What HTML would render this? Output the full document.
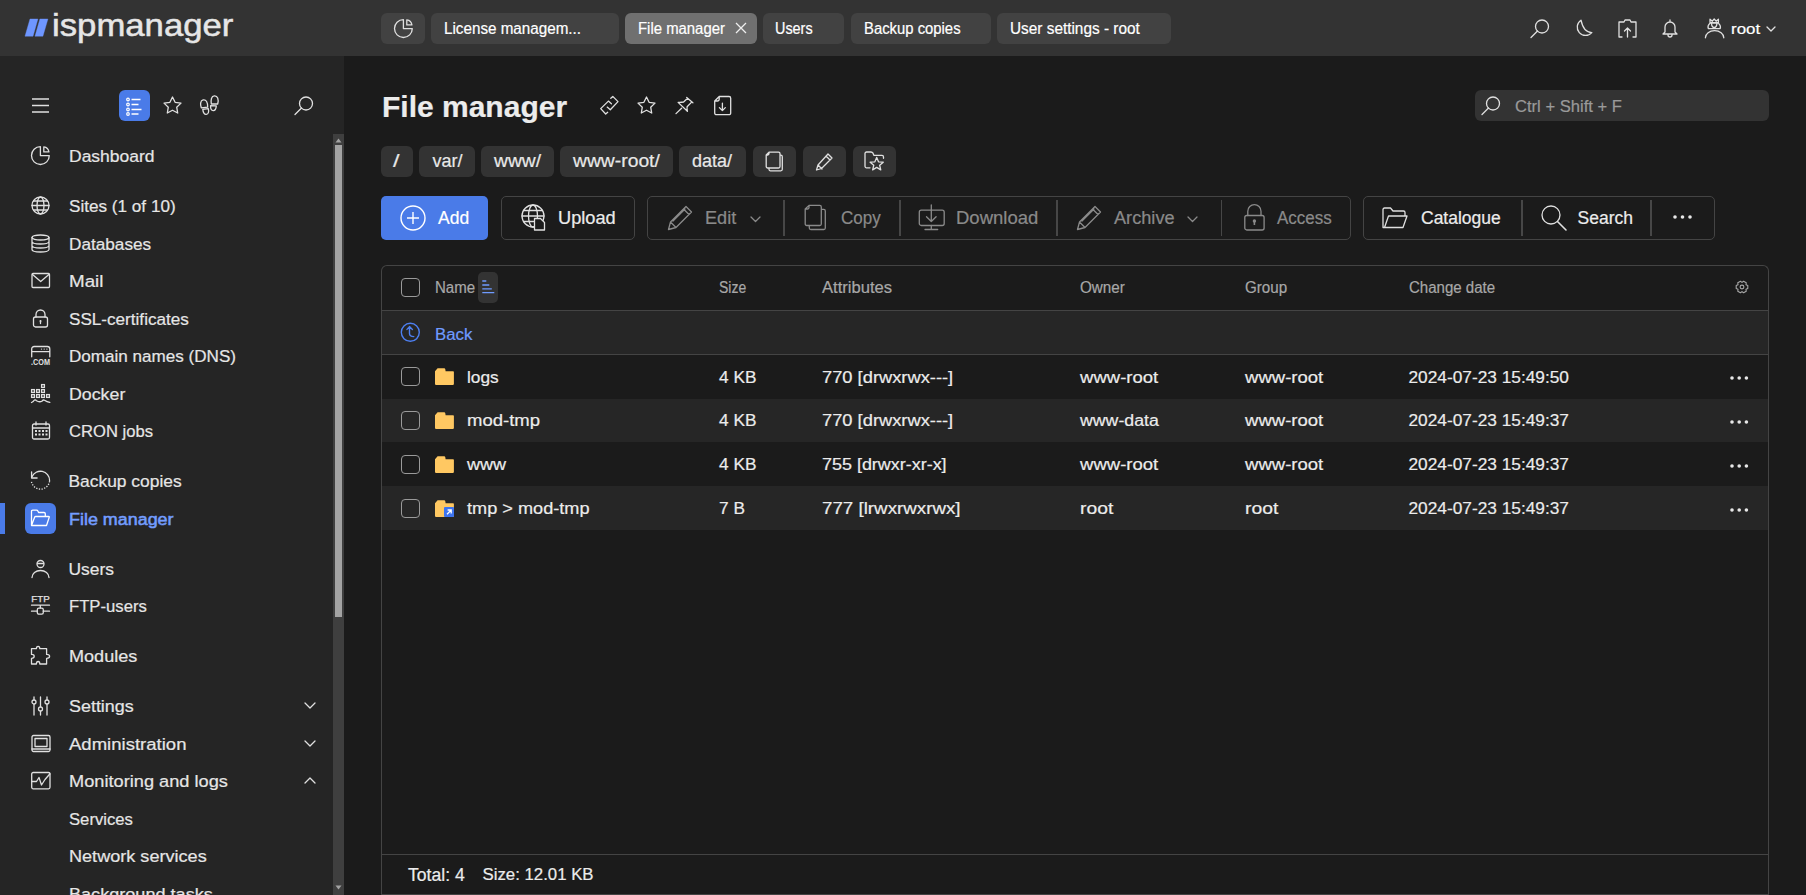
<!DOCTYPE html>
<html><head><meta charset="utf-8">
<style>
*{box-sizing:border-box;margin:0;padding:0}
html,body{width:1806px;height:895px;overflow:hidden;background:#1b1b1b;font-family:"Liberation Sans",sans-serif;color:#e8e8e8}
.t{position:absolute;white-space:nowrap;-webkit-text-stroke:0.2px currentColor}
.b{position:absolute}
svg{position:absolute;overflow:visible}
</style></head><body>
<div class="b" style="left:0px;top:0px;width:1806px;height:56px;background:#333333"></div>
<div class="b" style="left:0px;top:56px;width:344px;height:839px;background:#252525"></div>
<div class="b" style="left:344px;top:56px;width:1462px;height:839px;background:#1b1b1b"></div>
<svg style="left:25px;top:19px;" width="23" height="18" viewBox="0 0 23 18"><path d="M5 0H12.9L8 17.2H0Z M14.9 0H22.9L17.9 17.2H10Z" fill="#6e96ff" stroke="#6e96ff" stroke-width="0.4" stroke-linejoin="round"/></svg>
<div class="t" style="left:52px;top:9.11px;font-size:32px;line-height:32px;color:#e6e6e6;font-weight:normal;transform:scaleX(1.085);transform-origin:0 0;-webkit-text-stroke:0.5px #e6e6e6">ispmanager</div>
<div class="b" style="left:381px;top:13px;width:44px;height:31px;background:#424242;border-radius:6px"></div>
<div class="b" style="left:431px;top:13px;width:188px;height:31px;background:#424242;border-radius:6px"></div>
<div class="t" style="left:444px;top:20.79px;font-size:15.6px;line-height:15.6px;color:#ffffff;font-weight:normal;transform:scaleX(0.976);transform-origin:0 0;">License managem...</div>
<div class="b" style="left:625px;top:13px;width:132px;height:31px;background:#707070;border-radius:6px"></div>
<div class="t" style="left:638px;top:20.79px;font-size:15.6px;line-height:15.6px;color:#ffffff;font-weight:normal;transform:scaleX(0.955);transform-origin:0 0;">File manager</div>
<div class="b" style="left:763px;top:13px;width:81px;height:31px;background:#424242;border-radius:6px"></div>
<div class="t" style="left:775px;top:20.79px;font-size:15.6px;line-height:15.6px;color:#ffffff;font-weight:normal;transform:scaleX(0.923);transform-origin:0 0;">Users</div>
<div class="b" style="left:851px;top:13px;width:140px;height:31px;background:#424242;border-radius:6px"></div>
<div class="t" style="left:864px;top:20.79px;font-size:15.6px;line-height:15.6px;color:#ffffff;font-weight:normal;transform:scaleX(0.952);transform-origin:0 0;">Backup copies</div>
<div class="b" style="left:997px;top:13px;width:174px;height:31px;background:#424242;border-radius:6px"></div>
<div class="t" style="left:1010px;top:20.79px;font-size:15.6px;line-height:15.6px;color:#ffffff;font-weight:normal;transform:scaleX(0.985);transform-origin:0 0;">User settings - root</div>
<svg style="left:394px;top:19px;" width="19" height="19" viewBox="0 0 19 19"><path d="M9.4 0.7V9.6H18.3A8.9 8.9 0 1 1 9.4 0.7z" fill="none" stroke="#e0e0e0" stroke-width="1.3" stroke-linecap="round" stroke-linejoin="round"/><path d="M12.8 0.8V5.9H17.9A5.9 5.9 0 0 0 12.8 0.8z" fill="none" stroke="#e0e0e0" stroke-width="1.3" stroke-linecap="round" stroke-linejoin="round"/></svg>
<svg style="left:735px;top:22px;" width="12" height="12" viewBox="0 0 12 12"><path d="M1 1l10 10M11 1L1 11" fill="none" stroke="#eee" stroke-width="1.3"/></svg>
<svg style="left:1530px;top:19px;" width="20" height="19" viewBox="0 0 20 19"><circle cx="12" cy="7.5" r="6.5" fill="none" stroke="#e0e0e0" stroke-width="1.3" stroke-linecap="round" stroke-linejoin="round"/><path d="M7.5 12L1 18.5" fill="none" stroke="#e0e0e0" stroke-width="1.3" stroke-linecap="round" stroke-linejoin="round"/></svg>
<svg style="left:1574px;top:19px;" width="19" height="19" viewBox="0 0 19 19"><path d="M7 1.2A8.3 8.3 0 1 0 17.8 13.6Q9.5 13.5 7 1.2z" fill="none" stroke="#e0e0e0" stroke-width="1.3" stroke-linecap="round" stroke-linejoin="round"/></svg>
<svg style="left:1618px;top:19px;" width="19" height="19" viewBox="0 0 19 19"><path d="M4 18H1V3h5l1-2h5l1 2h5v15h-3" fill="none" stroke="#e0e0e0" stroke-width="1.3" stroke-linecap="round" stroke-linejoin="round"/><path d="M9.5 18V9M6.5 12l3-3 3 3" fill="none" stroke="#e0e0e0" stroke-width="1.3" stroke-linecap="round" stroke-linejoin="round"/></svg>
<svg style="left:1662px;top:19px;" width="16" height="19" viewBox="0 0 16 19"><path d="M8 1v2M3 13V8a5 5 0 0 1 10 0v5l2 2H1z M6 16a2 2 0 0 0 4 0" fill="none" stroke="#e0e0e0" stroke-width="1.3" stroke-linecap="round" stroke-linejoin="round"/></svg>
<svg style="left:1704px;top:18px;" width="21" height="21" viewBox="0 0 21 21"><path d="M6 4.7V1.2L8.3 3.2 10.2 1 12.1 3.2 14.4 1.2V4.7Z M4.3 10.6Q3.2 7.8 6 5.1H14.4Q17.2 7.8 16.2 10.6Z M7.4 5.4Q7.9 9.5 10.2 9.5Q12.5 9.5 13 5.4 M1.4 19.8A9.2 7.2 0 0 1 19.8 19.8" fill="none" stroke="#e0e0e0" stroke-width="1.3" stroke-linecap="round" stroke-linejoin="round"/></svg>
<div class="t" style="left:1730.5px;top:21.30px;font-size:15px;line-height:15px;color:#ffffff;font-weight:normal;transform:scaleX(1.127);transform-origin:0 0;">root</div>
<svg style="left:1766px;top:26px;" width="10" height="6" viewBox="0 0 10 6"><path d="M1 1l4 4 4-4" fill="none" stroke="#e0e0e0" stroke-width="1.3" stroke-linecap="round" stroke-linejoin="round"/></svg>
<svg style="left:31px;top:98px;" width="19" height="15" viewBox="0 0 19 15"><path d="M1 1h17M1 7.5h17M1 14h17" fill="none" stroke="#e0e0e0" stroke-width="1.4"/></svg>
<div class="b" style="left:119px;top:90px;width:31px;height:31px;background:#4a7be8;border-radius:6px"></div>
<svg style="left:125px;top:96px;" width="20" height="20" viewBox="0 0 20 20"><g fill="none" stroke="#fff" stroke-width="1.2"><circle cx="3" cy="3.5" r="1.3"/><circle cx="3" cy="8.5" r="1.3"/><circle cx="3" cy="13.5" r="1.3"/><circle cx="3" cy="18" r="1.3"/></g><g stroke="#fff" stroke-width="1.3"><path d="M6.5 3.5h9M6.5 8.5h7M6.5 13.5h10M6.5 18h7"/></g></svg>
<svg style="left:163px;top:96px;" width="19" height="19" viewBox="0 0 19 19"><path d="M9.5 1l2.6 5.3 5.9.8-4.3 4.1 1 5.8-5.2-2.8-5.2 2.8 1-5.8L1 7.1l5.9-.8z" fill="none" stroke="#e0e0e0" stroke-width="1.3" stroke-linecap="round" stroke-linejoin="round"/></svg>
<svg style="left:199px;top:95px;" width="21" height="21" viewBox="0 0 21 21"><path d="M2.3 12.8C1.2 10 1 5.6 4.1 4.9 7.2 4.3 8.8 7.3 8.7 12.2z M3.8 14.4L9.3 13.6C10.1 16.8 9.4 19.3 7.3 19.4 5.3 19.6 4.1 17.6 3.8 14.4z M12.3 9C11.7 5 12.3 1.1 15.4 .9 18.6 .7 19.9 4.3 18.7 9z M11.6 10.6L17.3 10.9C17.1 13.8 16.1 15.7 14.2 15.6 12.3 15.5 11.4 13.6 11.6 10.6z" fill="none" stroke="#e0e0e0" stroke-width="1.3" stroke-linecap="round" stroke-linejoin="round"/></svg>
<svg style="left:294px;top:96px;" width="20" height="19" viewBox="0 0 20 19"><circle cx="12" cy="7.5" r="6.5" fill="none" stroke="#e0e0e0" stroke-width="1.3" stroke-linecap="round" stroke-linejoin="round"/><path d="M7.5 12L1 18.5" fill="none" stroke="#e0e0e0" stroke-width="1.3" stroke-linecap="round" stroke-linejoin="round"/></svg>
<div class="b" style="left:333px;top:134px;width:11px;height:761px;background:#3f3f3f"></div>
<div class="b" style="left:335px;top:145px;width:7px;height:472px;background:#a3a3a3"></div>
<svg style="left:335px;top:138px;" width="7" height="5" viewBox="0 0 7 5"><path d="M3.5 0.5L6.5 4.5H0.5z" fill="#a3a3a3"/></svg>
<svg style="left:335px;top:885px;" width="7" height="5" viewBox="0 0 7 5"><path d="M3.5 4.5L6.5 0.5H0.5z" fill="#a3a3a3"/></svg>
<div class="t" style="left:68.5px;top:148.07px;font-size:17.4px;line-height:17.4px;color:#e6e6e6;font-weight:normal;transform:scaleX(1.006);transform-origin:0 0;">Dashboard</div>
<div class="t" style="left:68.5px;top:198.07px;font-size:17.4px;line-height:17.4px;color:#e6e6e6;font-weight:normal;transform:scaleX(0.985);transform-origin:0 0;">Sites (1 of 10)</div>
<div class="t" style="left:68.5px;top:235.57px;font-size:17.4px;line-height:17.4px;color:#e6e6e6;font-weight:normal;transform:scaleX(0.988);transform-origin:0 0;">Databases</div>
<div class="t" style="left:68.5px;top:273.07px;font-size:17.4px;line-height:17.4px;color:#e6e6e6;font-weight:normal;transform:scaleX(1.080);transform-origin:0 0;">Mail</div>
<div class="t" style="left:68.5px;top:310.57px;font-size:17.4px;line-height:17.4px;color:#e6e6e6;font-weight:normal;transform:scaleX(0.984);transform-origin:0 0;">SSL-certificates</div>
<div class="t" style="left:68.5px;top:348.07px;font-size:17.4px;line-height:17.4px;color:#e6e6e6;font-weight:normal;transform:scaleX(0.982);transform-origin:0 0;">Domain names (DNS)</div>
<div class="t" style="left:68.5px;top:385.57px;font-size:17.4px;line-height:17.4px;color:#e6e6e6;font-weight:normal;transform:scaleX(1.022);transform-origin:0 0;">Docker</div>
<div class="t" style="left:68.5px;top:423.07px;font-size:17.4px;line-height:17.4px;color:#e6e6e6;font-weight:normal;transform:scaleX(0.955);transform-origin:0 0;">CRON jobs</div>
<div class="t" style="left:68.5px;top:473.07px;font-size:17.4px;line-height:17.4px;color:#e6e6e6;font-weight:normal;">Backup copies</div>
<div class="t" style="left:69px;top:510.57px;font-size:17.4px;line-height:17.4px;color:#739dff;font-weight:normal;-webkit-text-stroke:0.55px #739dff;transform:scaleX(1.030);transform-origin:0 0;">File manager</div>
<div class="t" style="left:68.5px;top:560.57px;font-size:17.4px;line-height:17.4px;color:#e6e6e6;font-weight:normal;">Users</div>
<div class="t" style="left:68.5px;top:598.07px;font-size:17.4px;line-height:17.4px;color:#e6e6e6;font-weight:normal;transform:scaleX(0.959);transform-origin:0 0;">FTP-users</div>
<div class="t" style="left:68.5px;top:648.07px;font-size:17.4px;line-height:17.4px;color:#e6e6e6;font-weight:normal;transform:scaleX(1.040);transform-origin:0 0;">Modules</div>
<div class="t" style="left:68.5px;top:698.07px;font-size:17.4px;line-height:17.4px;color:#e6e6e6;font-weight:normal;transform:scaleX(1.030);transform-origin:0 0;">Settings</div>
<div class="t" style="left:68.5px;top:735.57px;font-size:17.4px;line-height:17.4px;color:#e6e6e6;font-weight:normal;transform:scaleX(1.066);transform-origin:0 0;">Administration</div>
<div class="t" style="left:68.5px;top:773.07px;font-size:17.4px;line-height:17.4px;color:#e6e6e6;font-weight:normal;transform:scaleX(1.047);transform-origin:0 0;">Monitoring and logs</div>
<div class="t" style="left:68.5px;top:810.57px;font-size:17.4px;line-height:17.4px;color:#e6e6e6;font-weight:normal;transform:scaleX(0.958);transform-origin:0 0;">Services</div>
<div class="t" style="left:68.5px;top:848.07px;font-size:17.4px;line-height:17.4px;color:#e6e6e6;font-weight:normal;transform:scaleX(1.040);transform-origin:0 0;">Network services</div>
<div class="t" style="left:68.5px;top:885.57px;font-size:17.4px;line-height:17.4px;color:#e6e6e6;font-weight:normal;transform:scaleX(1.040);transform-origin:0 0;">Background tasks</div>
<div class="b" style="left:0px;top:503px;width:5px;height:31px;background:#4a7be8"></div>
<div class="b" style="left:25px;top:503px;width:31px;height:31px;background:#4a7be8;border-radius:6px"></div>
<svg style="left:30px;top:509px;" width="21" height="19" viewBox="0 0 21 19"><path d="M1.5 16.5V2.5Q1.5 1.2 2.8 1.2H6.5Q7.5 1.2 8 2.2L8.6 3.5H14Q15.3 3.5 15.3 4.8V7.5 M1.5 16.5L4.6 8.2Q4.9 7.5 5.7 7.5H18.6Q19.5 7.5 19.2 8.4L16.5 16.5Z" fill="none" stroke="#fff" stroke-width="1.3" stroke-linejoin="round"/></svg>
<svg style="left:31px;top:146px;" width="19" height="19" viewBox="0 0 19 19"><path d="M9.4 0.7V9.6H18.3A8.9 8.9 0 1 1 9.4 0.7z" fill="none" stroke="#e0e0e0" stroke-width="1.3" stroke-linecap="round" stroke-linejoin="round"/><path d="M12.8 0.8V5.9H17.9A5.9 5.9 0 0 0 12.8 0.8z" fill="none" stroke="#e0e0e0" stroke-width="1.3" stroke-linecap="round" stroke-linejoin="round"/></svg>
<svg style="left:31px;top:196px;" width="19" height="19" viewBox="0 0 19 19"><circle cx="9.5" cy="9.5" r="8.5" fill="none" stroke="#e0e0e0" stroke-width="1.3" stroke-linecap="round" stroke-linejoin="round"/><ellipse cx="9.5" cy="9.5" rx="3.5" ry="8.5" fill="none" stroke="#e0e0e0" stroke-width="1.3" stroke-linecap="round" stroke-linejoin="round"/><path d="M1 9.5h17M2.5 5h14M2.5 14h14" fill="none" stroke="#e0e0e0" stroke-width="1.3" stroke-linecap="round" stroke-linejoin="round"/></svg>
<svg style="left:31px;top:233.5px;" width="19" height="19" viewBox="0 0 19 19"><ellipse cx="9.5" cy="3.5" rx="8.5" ry="2.5" fill="none" stroke="#e0e0e0" stroke-width="1.3" stroke-linecap="round" stroke-linejoin="round"/><path d="M1 3.5v12c0 1.4 3.8 2.5 8.5 2.5s8.5-1.1 8.5-2.5v-12 M1 7.5c0 1.4 3.8 2.5 8.5 2.5s8.5-1.1 8.5-2.5 M1 11.5c0 1.4 3.8 2.5 8.5 2.5s8.5-1.1 8.5-2.5" fill="none" stroke="#e0e0e0" stroke-width="1.3" stroke-linecap="round" stroke-linejoin="round"/></svg>
<svg style="left:31px;top:271px;" width="19" height="19" viewBox="0 0 19 19"><rect x="1" y="2.5" width="17.5" height="14" rx="1" fill="none" stroke="#e0e0e0" stroke-width="1.3" stroke-linecap="round" stroke-linejoin="round"/><path d="M1.5 3.5l8.2 7 8.2-7" fill="none" stroke="#e0e0e0" stroke-width="1.3" stroke-linecap="round" stroke-linejoin="round"/></svg>
<svg style="left:31px;top:308.5px;" width="19" height="19" viewBox="0 0 19 19"><rect x="2.5" y="8" width="14" height="10" rx="2" fill="none" stroke="#e0e0e0" stroke-width="1.3" stroke-linecap="round" stroke-linejoin="round"/><path d="M5 8V5.5a4.5 4.5 0 0 1 9 0V8 M9.5 12v2.5" fill="none" stroke="#e0e0e0" stroke-width="1.3" stroke-linecap="round" stroke-linejoin="round"/><circle cx="9.5" cy="12" r="1" fill="#e0e0e0"/></svg>
<svg style="left:31px;top:346px;" width="19" height="19" viewBox="0 0 19 19"><path d="M0.7 10.8V3A2.5 2.5 0 0 1 3.2 0.5H16.3A2.5 2.5 0 0 1 18.8 3V10.8M0.7 5.6H18.8" fill="none" stroke="#e0e0e0" stroke-width="1.3" stroke-linecap="round" stroke-linejoin="round"/><g fill="#e0e0e0"><circle cx="10.5" cy="3.1" r="0.7"/><circle cx="13.2" cy="3.1" r="0.7"/><circle cx="15.9" cy="3.1" r="0.7"/></g><text x="0" y="18.8" font-size="8.2" font-weight="bold" fill="#e0e0e0" font-family="Liberation Sans" textLength="19" lengthAdjust="spacingAndGlyphs">.COM</text></svg>
<svg style="left:31px;top:384px;" width="20" height="20" viewBox="0 0 20 20"><g fill="none" stroke="#e0e0e0" stroke-width="1.3"><rect x="10.6" y="0.6" width="2.8" height="2.8"/><rect x="0.6" y="5.6" width="2.8" height="2.8"/><rect x="5.6" y="5.6" width="2.8" height="2.8"/><rect x="10.6" y="5.6" width="2.8" height="2.8"/><rect x="0.6" y="10.6" width="2.8" height="2.8"/><rect x="5.6" y="10.6" width="2.8" height="2.8"/><rect x="10.6" y="10.6" width="2.8" height="2.8"/><rect x="15.6" y="10.6" width="2.8" height="2.8"/></g><path d="M0.5 18.5Q2.5 17.8 3.2 16.3Q4 15.3 5.5 16.8Q8.5 18.6 11.2 17Q12.3 15.5 13.5 16.2Q16 18 18.8 18.4" fill="none" stroke="#e0e0e0" stroke-width="1.3" stroke-linecap="round" stroke-linejoin="round"/></svg>
<svg style="left:31px;top:421px;" width="19" height="19" viewBox="0 0 19 19"><rect x="1.5" y="3" width="17" height="15" rx="1.5" fill="none" stroke="#e0e0e0" stroke-width="1.3" stroke-linecap="round" stroke-linejoin="round"/><path d="M1.5 7h17M5 1v3M15 1v3" fill="none" stroke="#e0e0e0" stroke-width="1.3" stroke-linecap="round" stroke-linejoin="round"/><g fill="#e0e0e0"><rect x="4" y="9" width="2" height="2"/><rect x="7.5" y="9" width="2" height="2"/><rect x="11" y="9" width="2" height="2"/><rect x="14.5" y="9" width="2" height="2"/><rect x="4" y="12.5" width="2" height="2"/><rect x="7.5" y="12.5" width="2" height="2"/><rect x="11" y="12.5" width="2" height="2"/><rect x="14.5" y="12.5" width="2" height="2"/></g></svg>
<svg style="left:31px;top:471px;" width="19" height="19" viewBox="0 0 19 19"><path d="M1 5.7A9.2 9.2 0 0 1 18.6 9.4" fill="none" stroke="#e0e0e0" stroke-width="1.3" stroke-linecap="round" stroke-linejoin="round"/><path d="M18.6 10.2A9.2 9.2 0 0 1 0.4 10.4" fill="none" stroke="#e0e0e0" stroke-width="1.3" stroke-dasharray="1.3 1.4"/><path d="M0.6 1V7H6.1" fill="none" stroke="#e0e0e0" stroke-width="1.3" stroke-linecap="round" stroke-linejoin="round"/></svg>
<svg style="left:31px;top:558.5px;" width="19" height="19" viewBox="0 0 19 19"><circle cx="9.5" cy="5" r="3.5" fill="none" stroke="#e0e0e0" stroke-width="1.3" stroke-linecap="round" stroke-linejoin="round"/><path d="M1 18.5a8.5 7 0 0 1 17 0" fill="none" stroke="#e0e0e0" stroke-width="1.3" stroke-linecap="round" stroke-linejoin="round"/><path d="M6.5 4.5h6" fill="none" stroke="#e0e0e0" stroke-width="1.3" stroke-linecap="round" stroke-linejoin="round"/></svg>
<svg style="left:31px;top:595px;" width="19" height="19" viewBox="0 0 19 19"><text x="0.3" y="7.3" font-size="8.6" fill="#e0e0e0" stroke="#e0e0e0" stroke-width="0.25" font-family="Liberation Sans" textLength="18.4" lengthAdjust="spacingAndGlyphs">FTP</text><path d="M0.5 10.2H18.5M0.5 16.2H6.3M12.3 16.2H18.5M9.3 10.2V13" fill="none" stroke="#e0e0e0" stroke-width="1.3" stroke-linecap="round" stroke-linejoin="round"/><rect x="6.3" y="13.2" width="6" height="6" rx="1.6" fill="none" stroke="#e0e0e0" stroke-width="1.3"/></svg>
<svg style="left:31px;top:646px;" width="19" height="19" viewBox="0 0 19 19"><path d="M0.5 2.7H5.4Q5.4 0.4 7.1 0.4Q8.8 0.4 8.8 2.7H15.6V8.4Q18.6 8.4 18.6 10.3Q18.6 12.3 15.6 12.3V18H8.8Q8.8 15.5 7.1 15.5Q5.4 15.5 5.4 18H0.5V12.3Q3.2 12.3 3.2 10.3Q3.2 8.4 0.5 8.4Z" fill="none" stroke="#e0e0e0" stroke-width="1.3" stroke-linecap="round" stroke-linejoin="round"/></svg>
<svg style="left:31px;top:696px;" width="19" height="19" viewBox="0 0 19 19"><path d="M3 1v18M9.5 1v18M16 1v18" fill="none" stroke="#e0e0e0" stroke-width="1.3" stroke-linecap="round" stroke-linejoin="round"/><circle cx="3" cy="6" r="2" fill="#252525" stroke="#e0e0e0" stroke-width="1.3"/><circle cx="9.5" cy="13" r="2" fill="#252525" stroke="#e0e0e0" stroke-width="1.3"/><circle cx="16" cy="6" r="2" fill="#252525" stroke="#e0e0e0" stroke-width="1.3"/></svg>
<svg style="left:31px;top:733.5px;" width="19" height="19" viewBox="0 0 19 19"><rect x="1" y="1.5" width="18" height="16" rx="1.5" fill="none" stroke="#e0e0e0" stroke-width="1.3" stroke-linecap="round" stroke-linejoin="round"/><rect x="4" y="4.5" width="12" height="8" fill="none" stroke="#e0e0e0" stroke-width="1.3" stroke-linecap="round" stroke-linejoin="round"/><path d="M1 15h18" fill="none" stroke="#e0e0e0" stroke-width="1.3" stroke-linecap="round" stroke-linejoin="round"/></svg>
<svg style="left:31px;top:771px;" width="20" height="19" viewBox="0 0 20 19"><rect x="0.7" y="1.5" width="18.3" height="16.3" rx="1.5" fill="none" stroke="#e0e0e0" stroke-width="1.3" stroke-linecap="round" stroke-linejoin="round"/><path d="M0.7 10.5H5.5L8 6.5 10.5 14 14 8.5 19 2.8" fill="none" stroke="#e0e0e0" stroke-width="1.3" stroke-linecap="round" stroke-linejoin="round"/></svg>
<svg style="left:304px;top:702px;" width="12" height="7" viewBox="0 0 12 7"><path d="M1 1l5 5 5-5" fill="none" stroke="#e0e0e0" stroke-width="1.3" stroke-linecap="round" stroke-linejoin="round"/></svg>
<svg style="left:304px;top:739.5px;" width="12" height="7" viewBox="0 0 12 7"><path d="M1 1l5 5 5-5" fill="none" stroke="#e0e0e0" stroke-width="1.3" stroke-linecap="round" stroke-linejoin="round"/></svg>
<svg style="left:304px;top:777px;" width="12" height="7" viewBox="0 0 12 7"><path d="M1 6l5-5 5 5" fill="none" stroke="#e0e0e0" stroke-width="1.3" stroke-linecap="round" stroke-linejoin="round"/></svg>
<div class="t" style="left:382px;top:91.81px;font-size:30px;line-height:30px;color:#ececec;font-weight:bold;">File manager</div>
<svg style="left:599px;top:95px;" width="21" height="21" viewBox="0 0 21 21"><path d="M12.4 8.7L9.4 6.1 1.7 13.6 6.7 19 8.7 17.3 M8.2 12.1L11.3 14.8 19 6.6 13.8 1.4 11.8 3.2" fill="none" stroke="#e0e0e0" stroke-width="1.3" stroke-linecap="round" stroke-linejoin="round"/></svg>
<svg style="left:637px;top:96px;" width="19" height="19" viewBox="0 0 19 19"><path d="M9.5 1l2.6 5.3 5.9.8-4.3 4.1 1 5.8-5.2-2.8-5.2 2.8 1-5.8L1 7.1l5.9-.8z" fill="none" stroke="#e0e0e0" stroke-width="1.3" stroke-linecap="round" stroke-linejoin="round"/></svg>
<svg style="left:675px;top:96px;" width="19" height="19" viewBox="0 0 19 19"><path d="M1 17.6L6.6 12.2 M3.1 6.4L12.4 15.3 M11.7 1.4L17.9 6.8 M3.1 6.4Q6 6.6 8.6 6L12.6 2.2 M12.4 15.3Q11.9 12.5 12.1 10.7L16.9 5.9" fill="none" stroke="#e0e0e0" stroke-width="1.3" stroke-linecap="round" stroke-linejoin="round"/></svg>
<svg style="left:714px;top:96px;" width="18" height="19" viewBox="0 0 18 19"><path d="M0.7 5L5.2 0.5H15A1.7 1.7 0 0 1 16.7 2.2V17A1.7 1.7 0 0 1 15 18.7H2.4A1.7 1.7 0 0 1 0.7 17z M0.7 5H3.5A1.7 1.7 0 0 0 5.2 3.3V0.5 M8.4 7.2V14.6 M5.4 11.6L8.4 14.6 11.3 11.6" fill="none" stroke="#e0e0e0" stroke-width="1.3" stroke-linecap="round" stroke-linejoin="round"/></svg>
<div class="b" style="left:1475px;top:90px;width:294px;height:31px;background:#333333;border-radius:6px"></div>
<svg style="left:1481px;top:96px;" width="20" height="19" viewBox="0 0 20 19"><circle cx="12" cy="7.5" r="6.5" fill="none" stroke="#e0e0e0" stroke-width="1.3" stroke-linecap="round" stroke-linejoin="round"/><path d="M7.5 12L1 18.5" fill="none" stroke="#e0e0e0" stroke-width="1.3" stroke-linecap="round" stroke-linejoin="round"/></svg>
<div class="t" style="left:1515px;top:99.45px;font-size:16.6px;line-height:16.6px;color:#9a9a9a;font-weight:normal;">Ctrl + Shift + F</div>
<div class="b" style="left:381px;top:146px;width:32px;height:31px;background:#333333;border-radius:6px"></div>
<div class="t" style="left:393px;top:152.46px;font-size:18px;line-height:18px;color:#e8e8e8;font-weight:normal;transform:scaleX(1.300);transform-origin:0 0;">/</div>
<div class="b" style="left:419px;top:146px;width:56px;height:31px;background:#333333;border-radius:6px"></div>
<div class="t" style="left:432.5px;top:152.46px;font-size:18px;line-height:18px;color:#e8e8e8;font-weight:normal;">var/</div>
<div class="b" style="left:481px;top:146px;width:73px;height:31px;background:#333333;border-radius:6px"></div>
<div class="t" style="left:494px;top:152.46px;font-size:18px;line-height:18px;color:#e8e8e8;font-weight:normal;transform:scaleX(1.071);transform-origin:0 0;">www/</div>
<div class="b" style="left:560px;top:146px;width:113px;height:31px;background:#333333;border-radius:6px"></div>
<div class="t" style="left:573px;top:152.46px;font-size:18px;line-height:18px;color:#e8e8e8;font-weight:normal;transform:scaleX(1.072);transform-origin:0 0;">www-root/</div>
<div class="b" style="left:679px;top:146px;width:67px;height:31px;background:#333333;border-radius:6px"></div>
<div class="t" style="left:692px;top:152.46px;font-size:18px;line-height:18px;color:#e8e8e8;font-weight:normal;">data/</div>
<div class="b" style="left:753px;top:146px;width:43px;height:31px;background:#333333;border-radius:6px"></div>
<div class="b" style="left:803px;top:146px;width:43px;height:31px;background:#333333;border-radius:6px"></div>
<div class="b" style="left:853px;top:146px;width:43px;height:31px;background:#333333;border-radius:6px"></div>
<svg style="left:765px;top:151px;" width="19" height="21" viewBox="0 0 19 21"><path d="M1.2 4L4 1.1H13.5A1.5 1.5 0 0 1 15 2.6V15.5A1.5 1.5 0 0 1 13.5 17H2.7A1.5 1.5 0 0 1 1.2 15.5Z M1.2 4H2.6A1.4 1.4 0 0 0 4 2.6V1.1 M15 4.2H15.8A1.5 1.5 0 0 1 17.3 5.7V18.3A1.5 1.5 0 0 1 15.8 19.8H5.5A1.5 1.5 0 0 1 4 18.3V17" fill="none" stroke="#e0e0e0" stroke-width="1.3" stroke-linecap="round" stroke-linejoin="round"/></svg>
<svg style="left:815px;top:152px;" width="19" height="19" viewBox="0 0 19 19"><path d="M13 2l4 4L6.5 16.5 1.5 18l1.5-5z M11 4l4 4 M3 13l4 4" fill="none" stroke="#e0e0e0" stroke-width="1.3" stroke-linecap="round" stroke-linejoin="round"/></svg>
<svg style="left:864px;top:151px;" width="21" height="21" viewBox="0 0 21 21"><path d="M6 16.8H2.5A1.5 1.5 0 0 1 1 15.3V2.5A1.5 1.5 0 0 1 2.5 1H7Q8.3 1 9 2.2L10 4.4H18A1.5 1.5 0 0 1 19.5 5.9V7.3" fill="none" stroke="#e0e0e0" stroke-width="1.3" stroke-linecap="round" stroke-linejoin="round"/><path d="M12.70 6.40 L14.52 10.79 L19.26 11.17 L15.65 14.26 L16.76 18.88 L12.70 16.40 L8.64 18.88 L9.75 14.26 L6.14 11.17 L10.88 10.79Z" fill="none" stroke="#e0e0e0" stroke-width="1.3" stroke-linecap="round" stroke-linejoin="round"/></svg>
<div class="b" style="left:381px;top:196px;width:107px;height:44px;background:#4a7be8;border-radius:5px"></div>
<svg style="left:400px;top:205px;" width="26" height="26" viewBox="0 0 26 26"><circle cx="13" cy="13" r="12" fill="none" stroke="#fff" stroke-width="1.4"/><path d="M13 7v12M7 13h12" stroke="#fff" stroke-width="1.4"/></svg>
<div class="t" style="left:438px;top:210.19px;font-size:17.5px;line-height:17.5px;color:#ffffff;font-weight:normal;">Add</div>
<div class="b" style="left:501px;top:196px;width:134px;height:44px;border:1px solid #444444;border-radius:5px"></div>
<svg style="left:521px;top:204px;" width="26" height="27" viewBox="0 0 26 27"><circle cx="12" cy="12" r="11" fill="none" stroke="#e0e0e0" stroke-width="1.3" stroke-linecap="round" stroke-linejoin="round"/><ellipse cx="12" cy="12" rx="4.5" ry="11" fill="none" stroke="#e0e0e0" stroke-width="1.3" stroke-linecap="round" stroke-linejoin="round"/><path d="M1 12h22M2.5 6.5h19M2.5 17.5h10" fill="none" stroke="#e0e0e0" stroke-width="1.3" stroke-linecap="round" stroke-linejoin="round"/><path d="M13.5 14.5h6l4 4v7.5h-10z" fill="#1b1b1b" stroke="#e0e0e0" stroke-width="1.3" stroke-linejoin="round"/></svg>
<div class="t" style="left:558px;top:210.19px;font-size:17.5px;line-height:17.5px;color:#ececec;font-weight:normal;transform:scaleX(1.041);transform-origin:0 0;">Upload</div>
<div class="b" style="left:647px;top:196px;width:704px;height:44px;border:1px solid #444444;border-radius:5px"></div>
<div class="b" style="left:783px;top:200px;width:2px;height:36px;background:#474747"></div>
<div class="b" style="left:899px;top:200px;width:2px;height:36px;background:#474747"></div>
<div class="b" style="left:1056px;top:200px;width:2px;height:36px;background:#474747"></div>
<div class="b" style="left:1221px;top:200px;width:1px;height:36px;background:#474747"></div>
<svg style="left:667px;top:205px;" width="26" height="26" viewBox="0 0 26 26"><path d="M19 1.5l5.5 5.5L9 22.5 1.5 24.5l2-7.5z M16.5 4l5.5 5.5 M3.5 17l5.5 5.5 M6 16l12-12" fill="none" stroke="#8a8a8a" stroke-width="1.3" stroke-linecap="round" stroke-linejoin="round"/></svg>
<div class="t" style="left:704.5px;top:210.19px;font-size:17.5px;line-height:17.5px;color:#8a8a8a;font-weight:normal;transform:scaleX(1.037);transform-origin:0 0;">Edit</div>
<svg style="left:750px;top:216px;" width="11" height="7" viewBox="0 0 11 7"><path d="M1 1l4.5 4.5L10 1" fill="none" stroke="#8a8a8a" stroke-width="1.3" stroke-linecap="round" stroke-linejoin="round"/></svg>
<svg style="left:804px;top:204px;" width="23" height="27" viewBox="0 0 23 27"><path d="M1.2 5L5 1.4H15.8A1.5 1.5 0 0 1 17.3 2.9V20A1.5 1.5 0 0 1 15.8 21.5H2.7A1.5 1.5 0 0 1 1.2 20Z M1.2 5H3.5A1.5 1.5 0 0 0 5 3.5V1.4 M17.3 5.4H19.8A1.5 1.5 0 0 1 21.3 6.9V24A1.5 1.5 0 0 1 19.8 25.5H6.8A1.5 1.5 0 0 1 5.3 24V21.5" fill="none" stroke="#8a8a8a" stroke-width="1.3" stroke-linecap="round" stroke-linejoin="round"/></svg>
<div class="t" style="left:841px;top:210.19px;font-size:17.5px;line-height:17.5px;color:#8a8a8a;font-weight:normal;transform:scaleX(0.971);transform-origin:0 0;">Copy</div>
<svg style="left:918px;top:204px;" width="27" height="27" viewBox="0 0 27 27"><rect x="1.3" y="6.2" width="24.9" height="15.3" rx="2" fill="none" stroke="#8a8a8a" stroke-width="1.3" stroke-linecap="round" stroke-linejoin="round"/><path d="M13.3 1V17.5M8.5 12.7L13.3 17.5 18.1 12.7M13.3 21.5V25.5M7 25.5H19.7" fill="none" stroke="#8a8a8a" stroke-width="1.3" stroke-linecap="round" stroke-linejoin="round"/></svg>
<div class="t" style="left:956px;top:210.19px;font-size:17.5px;line-height:17.5px;color:#8a8a8a;font-weight:normal;transform:scaleX(1.057);transform-origin:0 0;">Download</div>
<svg style="left:1076px;top:205px;" width="26" height="26" viewBox="0 0 26 26"><path d="M19 1.5l5.5 5.5L9 22.5 1.5 24.5l2-7.5z M16.5 4l5.5 5.5 M3.5 17l5.5 5.5 M6 16l12-12" fill="none" stroke="#8a8a8a" stroke-width="1.3" stroke-linecap="round" stroke-linejoin="round"/></svg>
<div class="t" style="left:1113.5px;top:210.19px;font-size:17.5px;line-height:17.5px;color:#8a8a8a;font-weight:normal;transform:scaleX(1.038);transform-origin:0 0;">Archive</div>
<svg style="left:1187px;top:216px;" width="11" height="7" viewBox="0 0 11 7"><path d="M1 1l4.5 4.5L10 1" fill="none" stroke="#8a8a8a" stroke-width="1.3" stroke-linecap="round" stroke-linejoin="round"/></svg>
<svg style="left:1244px;top:204px;" width="21" height="27" viewBox="0 0 21 27"><rect x="0.8" y="11.5" width="19.3" height="14.5" rx="2" fill="none" stroke="#8a8a8a" stroke-width="1.3" stroke-linecap="round" stroke-linejoin="round"/><path d="M3.8 11.5V7.2A6.6 6.6 0 0 1 17 7.2V11.5" fill="none" stroke="#8a8a8a" stroke-width="1.3" stroke-linecap="round" stroke-linejoin="round"/><circle cx="10.4" cy="17" r="1.7" fill="#8a8a8a"/><path d="M10.4 17V21" stroke="#8a8a8a" stroke-width="1.6"/></svg>
<div class="t" style="left:1277px;top:210.19px;font-size:17.5px;line-height:17.5px;color:#8a8a8a;font-weight:normal;transform:scaleX(0.971);transform-origin:0 0;">Access</div>
<div class="b" style="left:1363px;top:196px;width:352px;height:44px;border:1px solid #444444;border-radius:5px"></div>
<div class="b" style="left:1520.5px;top:200px;width:2px;height:36px;background:#474747"></div>
<div class="b" style="left:1650px;top:200px;width:2px;height:36px;background:#474747"></div>
<svg style="left:1382px;top:207px;" width="26" height="22" viewBox="0 0 26 22"><path d="M2.5 20.5H1V2.5A1.5 1.5 0 0 1 2.5 1h6l2.5 3h10.5A1.5 1.5 0 0 1 23 5.5v3 M2.5 20.5l4-11.5h18.5l-4 11.5z" fill="none" stroke="#e0e0e0" stroke-width="1.3" stroke-linecap="round" stroke-linejoin="round"/></svg>
<div class="t" style="left:1421px;top:210.19px;font-size:17.5px;line-height:17.5px;color:#ececec;font-weight:normal;">Catalogue</div>
<svg style="left:1541px;top:205px;" width="26" height="26" viewBox="0 0 26 26"><circle cx="10" cy="10" r="9" fill="none" stroke="#e0e0e0" stroke-width="1.3" stroke-linecap="round" stroke-linejoin="round"/><path d="M16.5 16.5L25 25" fill="none" stroke="#e0e0e0" stroke-width="1.6" stroke-linecap="round"/></svg>
<div class="t" style="left:1577.5px;top:210.19px;font-size:17.5px;line-height:17.5px;color:#ececec;font-weight:normal;">Search</div>
<svg style="left:1673px;top:215px;" width="19" height="4" viewBox="0 0 19 4"><circle cx="2" cy="2" r="1.8" fill="#e8e8e8"/><circle cx="9.5" cy="2" r="1.8" fill="#e8e8e8"/><circle cx="17" cy="2" r="1.8" fill="#e8e8e8"/></svg>
<div class="b" style="left:381px;top:265px;width:1388px;height:630px;border:1px solid #444444;border-bottom:none;border-radius:6px 6px 0 0"></div>
<div class="b" style="left:382px;top:310px;width:1386px;height:1px;background:#444444"></div>
<div class="b" style="left:382px;top:311px;width:1386px;height:43px;background:#262626"></div>
<div class="b" style="left:382px;top:354px;width:1386px;height:1px;background:#444444"></div>
<div class="b" style="left:382px;top:355px;width:1386px;height:44px;background:#1b1b1b"></div>
<div class="b" style="left:382px;top:399px;width:1386px;height:43px;background:#262626"></div>
<div class="b" style="left:382px;top:442px;width:1386px;height:44px;background:#1b1b1b"></div>
<div class="b" style="left:382px;top:486px;width:1386px;height:44px;background:#262626"></div>
<div class="b" style="left:401px;top:278px;width:19px;height:19px;border:1.3px solid #9a9a9a;border-radius:4px"></div>
<div class="t" style="left:434.5px;top:279.76px;font-size:16px;line-height:16px;color:#a8a8a8;font-weight:normal;transform:scaleX(0.940);transform-origin:0 0;">Name</div>
<div class="b" style="left:478px;top:272px;width:20px;height:31px;background:#333333;border-radius:5px"></div>
<svg style="left:482px;top:280px;" width="13" height="14" viewBox="0 0 13 14"><g stroke="#6f9bff" stroke-width="1.3"><path d="M0.3 1h4M0.3 5h7M0.3 8.8h9.5M0.3 12.6h12"/></g></svg>
<div class="t" style="left:719px;top:279.76px;font-size:16px;line-height:16px;color:#a8a8a8;font-weight:normal;transform:scaleX(0.872);transform-origin:0 0;">Size</div>
<div class="t" style="left:822px;top:279.76px;font-size:16px;line-height:16px;color:#a8a8a8;font-weight:normal;transform:scaleX(1.037);transform-origin:0 0;">Attributes</div>
<div class="t" style="left:1080px;top:279.76px;font-size:16px;line-height:16px;color:#a8a8a8;font-weight:normal;transform:scaleX(0.950);transform-origin:0 0;">Owner</div>
<div class="t" style="left:1245px;top:279.76px;font-size:16px;line-height:16px;color:#a8a8a8;font-weight:normal;transform:scaleX(0.947);transform-origin:0 0;">Group</div>
<div class="t" style="left:1408.5px;top:279.76px;font-size:16px;line-height:16px;color:#a8a8a8;font-weight:normal;transform:scaleX(0.940);transform-origin:0 0;">Change date</div>
<svg style="left:1736px;top:281px;" width="12" height="12" viewBox="0 0 12 12"><path d="M9.99 3.71 L11.80 4.46 L11.80 7.54 L9.99 8.29 L9.98 8.31 L10.23 10.25 L7.56 11.79 L6.02 10.60 L5.98 10.60 L4.44 11.79 L1.77 10.25 L2.02 8.31 L2.01 8.29 L0.20 7.54 L0.20 4.46 L2.01 3.71 L2.02 3.69 L1.77 1.75 L4.44 0.21 L5.98 1.40 L6.02 1.40 L7.56 0.21 L10.23 1.75 L9.98 3.69Z" fill="none" stroke="#a8a8a8" stroke-width="1.1" stroke-linejoin="round"/><circle cx="6" cy="6" r="1.9" fill="none" stroke="#a8a8a8" stroke-width="1.1"/></svg>
<svg style="left:400px;top:322px;" width="21" height="21" viewBox="0 0 21 21"><circle cx="10.3" cy="10.3" r="9" fill="none" stroke="#4d7ff0" stroke-width="1.4"/><path d="M9.5 4.8V11.5Q9.5 14.6 13.8 14.6 M7 7.4L9.5 4.6 12.4 7.4" fill="none" stroke="#4d7ff0" stroke-width="1.4" stroke-linecap="round" stroke-linejoin="round"/></svg>
<div class="t" style="left:435px;top:325.56px;font-size:17.3px;line-height:17.3px;color:#6f9bff;font-weight:normal;transform:scaleX(0.971);transform-origin:0 0;">Back</div>
<div class="b" style="left:401px;top:366.5px;width:19px;height:19px;border:1.3px solid #9a9a9a;border-radius:4px"></div>
<svg style="left:435px;top:368px;" width="19" height="17" viewBox="0 0 19 17"><path d="M0 3.2L2.6 0.3H9.2Q10.1 0.3 10.3 1.2L10.6 3.2H18.1Q18.9 3.2 18.9 4V16.1Q18.9 16.9 18.1 16.9H0.8Q0 16.9 0 16.1z" fill="#ffc862"/></svg>
<div class="t" style="left:467px;top:368.76px;font-size:17.3px;line-height:17.3px;color:#ececec;font-weight:normal;">logs</div>
<div class="t" style="left:719px;top:368.76px;font-size:17.3px;line-height:17.3px;color:#ececec;font-weight:normal;">4 KB</div>
<div class="t" style="left:822px;top:368.76px;font-size:17.3px;line-height:17.3px;color:#ececec;font-weight:normal;transform:scaleX(1.059);transform-origin:0 0;">770 [drwxrwx---]</div>
<div class="t" style="left:1080px;top:368.76px;font-size:17.3px;line-height:17.3px;color:#ececec;font-weight:normal;transform:scaleX(1.072);transform-origin:0 0;">www-root</div>
<div class="t" style="left:1245px;top:368.76px;font-size:17.3px;line-height:17.3px;color:#ececec;font-weight:normal;transform:scaleX(1.072);transform-origin:0 0;">www-root</div>
<div class="t" style="left:1408.5px;top:368.76px;font-size:17.3px;line-height:17.3px;color:#ececec;font-weight:normal;">2024-07-23 15:49:50</div>
<svg style="left:1730px;top:375.5px;" width="19" height="4" viewBox="0 0 19 4"><circle cx="2" cy="2" r="1.8" fill="#e8e8e8"/><circle cx="9.2" cy="2" r="1.8" fill="#e8e8e8"/><circle cx="16.4" cy="2" r="1.8" fill="#e8e8e8"/></svg>
<div class="b" style="left:401px;top:410.5px;width:19px;height:19px;border:1.3px solid #9a9a9a;border-radius:4px"></div>
<svg style="left:435px;top:412px;" width="19" height="17" viewBox="0 0 19 17"><path d="M0 3.2L2.6 0.3H9.2Q10.1 0.3 10.3 1.2L10.6 3.2H18.1Q18.9 3.2 18.9 4V16.1Q18.9 16.9 18.1 16.9H0.8Q0 16.9 0 16.1z" fill="#ffc862"/></svg>
<div class="t" style="left:467px;top:412.46px;font-size:17.3px;line-height:17.3px;color:#ececec;font-weight:normal;transform:scaleX(1.072);transform-origin:0 0;">mod-tmp</div>
<div class="t" style="left:719px;top:412.46px;font-size:17.3px;line-height:17.3px;color:#ececec;font-weight:normal;">4 KB</div>
<div class="t" style="left:822px;top:412.46px;font-size:17.3px;line-height:17.3px;color:#ececec;font-weight:normal;transform:scaleX(1.059);transform-origin:0 0;">770 [drwxrwx---]</div>
<div class="t" style="left:1080px;top:412.46px;font-size:17.3px;line-height:17.3px;color:#ececec;font-weight:normal;transform:scaleX(1.025);transform-origin:0 0;">www-data</div>
<div class="t" style="left:1245px;top:412.46px;font-size:17.3px;line-height:17.3px;color:#ececec;font-weight:normal;transform:scaleX(1.072);transform-origin:0 0;">www-root</div>
<div class="t" style="left:1408.5px;top:412.46px;font-size:17.3px;line-height:17.3px;color:#ececec;font-weight:normal;">2024-07-23 15:49:37</div>
<svg style="left:1730px;top:419.5px;" width="19" height="4" viewBox="0 0 19 4"><circle cx="2" cy="2" r="1.8" fill="#e8e8e8"/><circle cx="9.2" cy="2" r="1.8" fill="#e8e8e8"/><circle cx="16.4" cy="2" r="1.8" fill="#e8e8e8"/></svg>
<div class="b" style="left:401px;top:454.5px;width:19px;height:19px;border:1.3px solid #9a9a9a;border-radius:4px"></div>
<svg style="left:435px;top:456px;" width="19" height="17" viewBox="0 0 19 17"><path d="M0 3.2L2.6 0.3H9.2Q10.1 0.3 10.3 1.2L10.6 3.2H18.1Q18.9 3.2 18.9 4V16.1Q18.9 16.9 18.1 16.9H0.8Q0 16.9 0 16.1z" fill="#ffc862"/></svg>
<div class="t" style="left:467px;top:455.96px;font-size:17.3px;line-height:17.3px;color:#ececec;font-weight:normal;transform:scaleX(1.046);transform-origin:0 0;">www</div>
<div class="t" style="left:719px;top:455.96px;font-size:17.3px;line-height:17.3px;color:#ececec;font-weight:normal;">4 KB</div>
<div class="t" style="left:822px;top:455.96px;font-size:17.3px;line-height:17.3px;color:#ececec;font-weight:normal;transform:scaleX(1.038);transform-origin:0 0;">755 [drwxr-xr-x]</div>
<div class="t" style="left:1080px;top:455.96px;font-size:17.3px;line-height:17.3px;color:#ececec;font-weight:normal;transform:scaleX(1.072);transform-origin:0 0;">www-root</div>
<div class="t" style="left:1245px;top:455.96px;font-size:17.3px;line-height:17.3px;color:#ececec;font-weight:normal;transform:scaleX(1.072);transform-origin:0 0;">www-root</div>
<div class="t" style="left:1408.5px;top:455.96px;font-size:17.3px;line-height:17.3px;color:#ececec;font-weight:normal;">2024-07-23 15:49:37</div>
<svg style="left:1730px;top:463.5px;" width="19" height="4" viewBox="0 0 19 4"><circle cx="2" cy="2" r="1.8" fill="#e8e8e8"/><circle cx="9.2" cy="2" r="1.8" fill="#e8e8e8"/><circle cx="16.4" cy="2" r="1.8" fill="#e8e8e8"/></svg>
<div class="b" style="left:401px;top:498.5px;width:19px;height:19px;border:1.3px solid #9a9a9a;border-radius:4px"></div>
<svg style="left:435px;top:500px;" width="19" height="17" viewBox="0 0 19 17"><path d="M0 3.2L2.6 0.3H9.2Q10.1 0.3 10.3 1.2L10.6 3.2H18.1Q18.9 3.2 18.9 4V16.1Q18.9 16.9 18.1 16.9H0.8Q0 16.9 0 16.1z" fill="#ffc862"/></svg>
<div class="b" style="left:444px;top:507px;width:10px;height:10px;background:#3d74f0;border-radius:1px"></div>
<svg style="left:446px;top:509px;" width="6" height="6" viewBox="0 0 6 6"><path d="M1 5.2L5 1.2M1.6 1H5.2V4.6" fill="none" stroke="#fff" stroke-width="1.3"/></svg>
<div class="t" style="left:467px;top:499.66px;font-size:17.3px;line-height:17.3px;color:#ececec;font-weight:normal;transform:scaleX(1.050);transform-origin:0 0;">tmp &gt; mod-tmp</div>
<div class="t" style="left:719px;top:499.66px;font-size:17.3px;line-height:17.3px;color:#ececec;font-weight:normal;">7 B</div>
<div class="t" style="left:822px;top:499.66px;font-size:17.3px;line-height:17.3px;color:#ececec;font-weight:normal;transform:scaleX(1.085);transform-origin:0 0;">777 [lrwxrwxrwx]</div>
<div class="t" style="left:1080px;top:499.66px;font-size:17.3px;line-height:17.3px;color:#ececec;font-weight:normal;transform:scaleX(1.117);transform-origin:0 0;">root</div>
<div class="t" style="left:1245px;top:499.66px;font-size:17.3px;line-height:17.3px;color:#ececec;font-weight:normal;transform:scaleX(1.117);transform-origin:0 0;">root</div>
<div class="t" style="left:1408.5px;top:499.66px;font-size:17.3px;line-height:17.3px;color:#ececec;font-weight:normal;">2024-07-23 15:49:37</div>
<svg style="left:1730px;top:507.5px;" width="19" height="4" viewBox="0 0 19 4"><circle cx="2" cy="2" r="1.8" fill="#e8e8e8"/><circle cx="9.2" cy="2" r="1.8" fill="#e8e8e8"/><circle cx="16.4" cy="2" r="1.8" fill="#e8e8e8"/></svg>
<div class="b" style="left:382px;top:854px;width:1387px;height:1px;background:#444444"></div>
<div class="t" style="left:408px;top:866.60px;font-size:17.6px;line-height:17.6px;color:#ececec;font-weight:normal;">Total: 4</div>
<div class="t" style="left:482.5px;top:867.28px;font-size:16.8px;line-height:16.8px;color:#ececec;font-weight:normal;">Size: 12.01 KB</div>
<div class="b" style="left:382px;top:894px;width:1387px;height:1px;background:#444444"></div>
</body></html>
